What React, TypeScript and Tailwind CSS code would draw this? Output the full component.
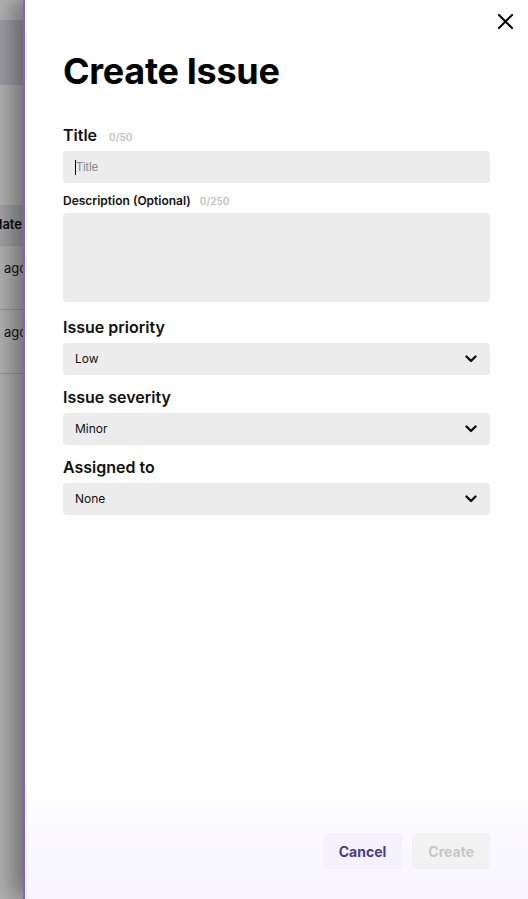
import React from "react";

const inter = { fontFamily: "Inter, 'Noto Sans', sans-serif" };

function Chevron() {
  return (
    <svg width="12" height="8" viewBox="0 0 12 8" fill="none" className="shrink-0">
      <path d="M1.5 1.5 L6 6 L10.5 1.5" stroke="#111" strokeWidth="2.4" strokeLinecap="round" strokeLinejoin="round" />
    </svg>
  );
}

function Select({ value }: { value: string }) {
  return (
    <div className="mt-1 flex h-8 items-center justify-between rounded-[4px] bg-[#ececec] pl-3 pr-[13px] text-[12px] text-[#111]">
      <span>{value}</span>
      <Chevron />
    </div>
  );
}

function Label({ text, count, small }: { text: string; count?: string; small?: boolean }) {
  return (
    <div className={small ? "flex items-baseline gap-[9px]" : "flex items-baseline gap-3"}>
      <span className={small ? "text-[12px] font-semibold leading-4 text-[#111]" : "text-base font-semibold leading-6 text-[#111]"}>
        {text}
      </span>
      {count && <span className="text-[10px] font-semibold text-[#c2c2c2]">{count}</span>}
    </div>
  );
}

export default function App() {
  return (
    <div className="relative h-[899px] w-[528px] overflow-hidden bg-white" style={inter}>
      {/* page behind the drawer */}
      <div className="flex flex-col">
        <div className="h-[20px] bg-white" />
        <div className="h-[65px] bg-[#e4e3ee]" />
        <div className="h-[120px] bg-white" />
        <div className="flex h-[41px] items-center border-b border-[#e2e2e2] bg-[#e9e9ef]">
          <div className="flex w-[22px] justify-end overflow-hidden whitespace-nowrap text-[13px] font-semibold text-[#111]">
            Update
          </div>
        </div>
        <div className="h-[64px] border-b border-[#d8d8d8] pl-1 pt-[13px] text-[13px] text-[#222]">ago</div>
        <div className="h-[64px] border-b border-[#d8d8d8] pl-1 pt-[13px] text-[13px] text-[#222]">ago</div>
      </div>

      {/* backdrop */}
      <div className="absolute inset-0 bg-black/30" />

      {/* drawer */}
      <div className="absolute inset-y-0 left-[23px] right-0 flex flex-col border-l-2 border-[#7b5cf6] bg-linear-to-b from-white from-[86%] to-[#f7f4ff] px-[38px] shadow-[-10px_0_22px_rgba(0,0,0,0.38)]">
        <div className="-mr-[23px] flex justify-end pt-[14px]">
          <svg width="15" height="15" viewBox="0 0 15 15" fill="none">
            <path d="M1 1 L14 14 M14 1 L1 14" stroke="#000" strokeWidth="2" strokeLinecap="square" />
          </svg>
        </div>

        <h1 className="mt-[22px] text-[36px] font-bold leading-[40px] tracking-[-0.3px] text-black">Create Issue</h1>

        <div className="mt-8">
          <Label text="Title" count="0/50" />
          <div className="relative mt-1 flex h-8 items-center rounded-[4px] bg-[#ececec] px-3">
            <span className="h-[15px] w-px bg-black" />
            <span className="text-[12px] text-[#8a8a8a]" style={{ fontFamily: "'Liberation Sans', Arial, sans-serif" }}>
              Title
            </span>
          </div>
        </div>

        <div className="mt-[10px]">
          <Label text="Description (Optional)" count="0/250" small />
          <div className="mt-1 h-[89px] rounded-[4px] bg-[#ececec]" />
        </div>

        <div className="mt-[13px]">
          <Label text="Issue priority" />
          <Select value="Low" />
        </div>
        <div className="mt-[10px]">
          <Label text="Issue severity" />
          <Select value="Minor" />
        </div>
        <div className="mt-[10px]">
          <Label text="Assigned to" />
          <Select value="None" />
        </div>

        <div className="mt-auto mb-[30px] flex justify-end gap-[10px]">
          <button className="h-9 rounded-[4px] bg-[#f5f2fe] px-4 text-[14px] font-bold text-[#4a3a8e]">Cancel</button>
          <button className="h-9 rounded-[4px] bg-[#f2f2f2] px-4 text-[14px] font-bold text-[#c6c6c6]">Create</button>
        </div>
      </div>
    </div>
  );
}
